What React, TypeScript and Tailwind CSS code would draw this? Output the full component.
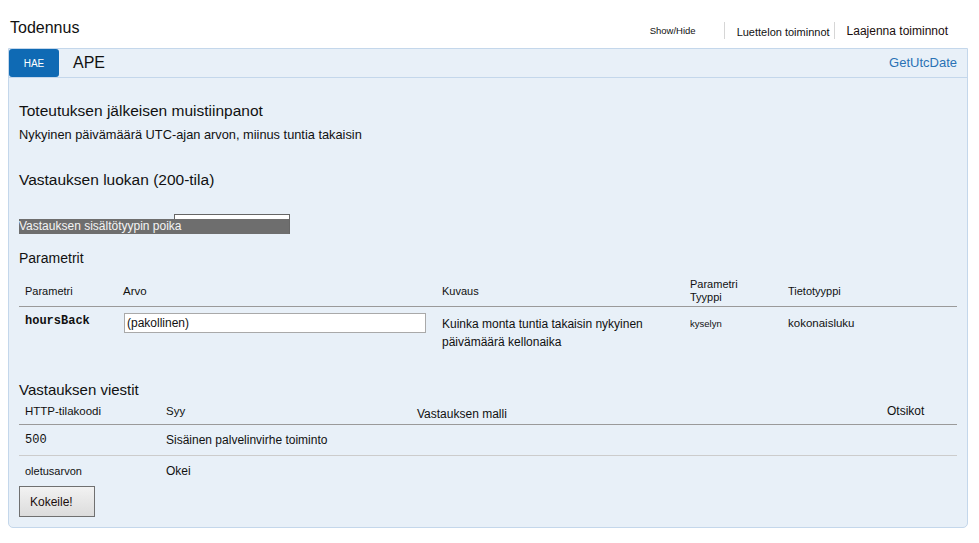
export default function App() {
  const paramCols = "grid grid-cols-[98px_319px_248px_98px_175px]";
  const respCols = "grid grid-cols-[141px_251px_470px_76px]";

  return (
    <div className="w-[979px] h-[543px] overflow-hidden bg-white text-[#111] font-['Liberation_Sans',Arial,sans-serif]">
      {/* top line */}
      <div className="flex h-[48px]">
        <h1 className="pl-[10px] pt-[19px] text-[16px] leading-[18px]">Todennus</h1>
        <div className="ml-auto mt-[22px] flex h-[17px] items-center pr-[31px]">
          <span className="text-[9.5px] leading-[12px]">Show/Hide</span>
          <span className="ml-[28px] h-[17px] w-px bg-[#d6d6d6]" />
          <span className="ml-[12px] mt-[3px] text-[11px] leading-[14px]">Luettelon toiminnot</span>
          <span className="ml-[4px] h-[17px] w-px bg-[#d6d6d6]" />
          <span className="ml-[12px] mt-[1px] text-[12px] leading-[14px] text-[#1a0d0d]">Laajenna toiminnot</span>
        </div>
      </div>

      {/* operation panel */}
      <div className="ml-[8px] w-[960px] rounded-b-[5px] border border-[#c4d7eb] bg-[#e8f0f8]">
        <div className="flex h-[29px] items-center border-b border-[#c4d7eb]">
          <span className="flex h-[28px] w-[50px] items-center justify-center rounded-[3px] bg-[#0f6ab4] text-[10px] text-white">
            HAE
          </span>
          <span className="ml-[14px] text-[16px] leading-[20px]">APE</span>
          <span className="ml-auto pr-[10px] text-[13px] text-[#2a72b5]">GetUtcDate</span>
        </div>

        <div className="px-[10px] pb-[10px]">
          <h4 className="mt-[23px] text-[15.5px] leading-[20px]">Toteutuksen jälkeisen muistiinpanot</h4>
          <p className="mt-[6px] text-[12.8px] leading-[16px]">
            Nykyinen päivämäärä UTC-ajan arvon, miinus tuntia takaisin
          </p>
          <h4 className="mt-[27px] text-[15.5px] leading-[20px]">Vastauksen luokan (200-tila)</h4>

          {/* content type select with overlapping label */}
          <div className="relative mt-[24px] h-[20px] w-[271px]">
            <div className="absolute left-[155px] top-0 h-[20px] w-[116px] border border-[#666] bg-white" />
            <div className="absolute bottom-0 left-0 h-[15px] w-[270px] bg-[#6e6e6e] text-[12px] leading-[15px] text-[#f4f4f4]">
              Vastauksen sisältötyypin poika
            </div>
          </div>

          <h4 className="mt-[15px] text-[14px] leading-[18px]">Parametrit</h4>

          <div className="mt-[9px] w-[938px]">
            <div className={`${paramCols} h-[31px] items-center border-b border-[#9a9a9a] text-[11px]`}>
              <div className="pl-[6px]">Parametri</div>
              <div className="pl-[6px] pt-[2px] text-[11.5px]">Arvo</div>
              <div className="pl-[6px]">Kuvaus</div>
              <div className="pl-[6px] leading-[13px]">
                Parametri
                <br />
                Tyyppi
              </div>
              <div className="pl-[6px]">Tietotyyppi</div>
            </div>
            <div className={`${paramCols} h-[50px] items-start`}>
              <div className="pl-[6px] pt-[6px] font-['Liberation_Mono',monospace] text-[12px] font-bold leading-[16px]">
                hoursBack
              </div>
              <div className="pl-[7px] pt-[6px]">
                <div className="flex h-[20px] w-[302px] items-center border border-[#a9a9a9] bg-white pl-[2px] text-[12px]">
                  (pakollinen)
                </div>
              </div>
              <div className="pl-[6px] pt-[8px] text-[12px] leading-[18px]">
                Kuinka monta tuntia takaisin nykyinen päivämäärä kellonaika
              </div>
              <div className="pl-[6px] pt-[11px] text-[9.5px] leading-[12px]">kyselyn</div>
              <div className="pl-[6px] pt-[9px] text-[11.5px] leading-[14px]">kokonaisluku</div>
            </div>
          </div>

          <h4 className="mt-[24px] text-[15px] leading-[18px]">Vastauksen viestit</h4>

          <div className="mt-[1px] w-[938px]">
            <div className={`${respCols} h-[25px] items-center border-b border-[#9a9a9a] text-[11.5px]`}>
              <div className="pl-[6px]">HTTP-tilakoodi</div>
              <div className="pl-[6px]">Syy</div>
              <div className="pl-[6px] pt-[3px] text-[12px]">Vastauksen malli</div>
              <div className="pl-[6px] pb-[2px] text-[12px]">Otsikot</div>
            </div>
            <div className={`${respCols} h-[31px] items-center border-b border-[#cccccc]`}>
              <div className="pl-[6px] font-['Liberation_Mono',monospace] text-[12px]">500</div>
              <div className="pl-[6px] text-[12px]">Sisäinen palvelinvirhe toiminto</div>
              <div />
              <div />
            </div>
            <div className={`${respCols} h-[30px] items-center`}>
              <div className="pl-[6px] text-[11px]">oletusarvon</div>
              <div className="pl-[6px] text-[12px]">Okei</div>
              <div />
              <div />
            </div>
          </div>

          <button
            type="button"
            className="block h-[31px] w-[76px] border border-[#707070] bg-gradient-to-b from-[#f2f2f2] to-[#dcdcdc] pl-[10px] text-left text-[12px] text-[#1a0d0d]"
          >
            Kokeile!
          </button>
        </div>
      </div>
    </div>
  );
}
